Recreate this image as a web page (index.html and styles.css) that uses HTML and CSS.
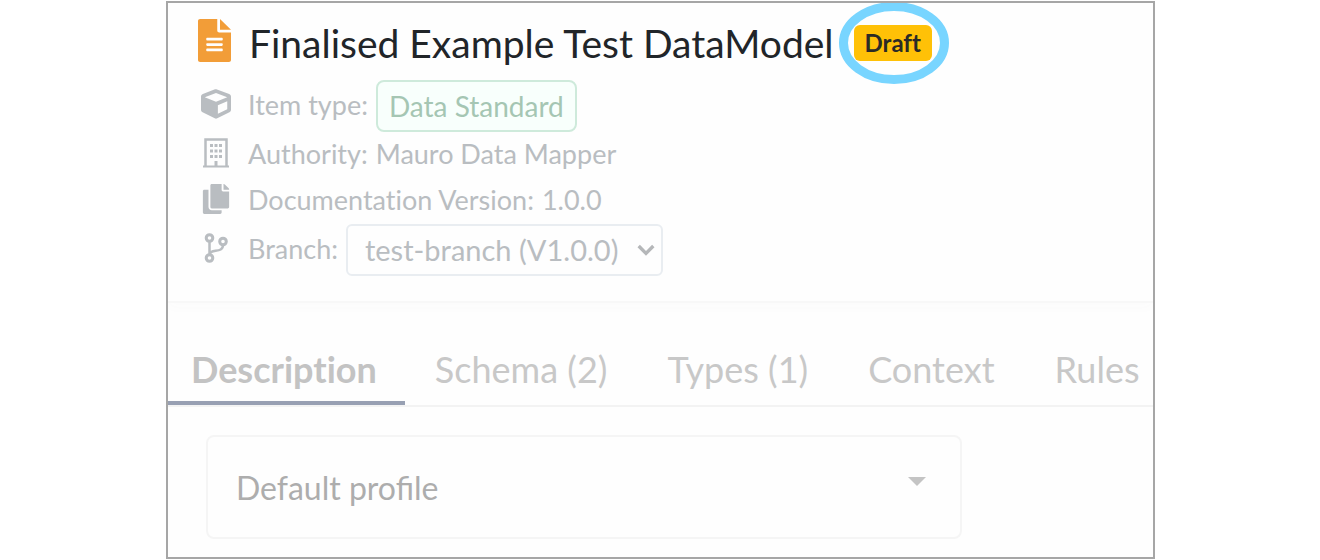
FILE: index.html
```html
<!DOCTYPE html>
<html lang="en">
<head>
<meta charset="utf-8">
<title>Finalised Example Test DataModel</title>
<link rel="stylesheet" href="styles.css">
</head>
<body>
<main class="panel">
  <header class="summary">
    <div class="title-row">
      <svg class="title-icon" viewBox="0 0 384 512" preserveAspectRatio="none" aria-hidden="true"><path fill="currentColor" d="M224 136V0H24C10.700 0 0 10.700 0 24v464c0 13.300 10.700 24 24 24h336c13.300 0 24-10.700 24-24V160H248c-13.200 0-24-10.800-24-24zm64 236c0 6.600-5.400 12-12 12H108c-6.600 0-12-5.400-12-12v-8c0-6.600 5.400-12 12-12h168c6.600 0 12 5.400 12 12v8zm0-64c0 6.600-5.400 12-12 12H108c-6.600 0-12-5.400-12-12v-8c0-6.600 5.400-12 12-12h168c6.600 0 12 5.400 12 12v8zm0-72v8c0 6.600-5.400 12-12 12H108c-6.600 0-12-5.400-12-12v-8c0-6.600 5.400-12 12-12h168c6.600 0 12 5.400 12 12zm96-108H256V0z"/></svg>
      <h1 class="title">Finalised Example Test DataModel</h1>
      <span class="status"><span class="badge">Draft</span><svg class="ring" viewBox="0 0 112 84" aria-hidden="true"><ellipse cx="56" cy="42" rx="50.500" ry="36.500" fill="none" stroke="#78d5ff" stroke-width="9"/></svg></span>
    </div>
    <div class="detail tall">
      <svg class="icon" viewBox="0 0 512 512" aria-hidden="true"><path fill="currentColor" d="M239.100 6.300l-208 78c-18.700 7-31.100 25-31.100 45v225.100c0 18.200 10.300 34.800 26.500 42.900l208 104c13.500 6.800 29.400 6.800 42.900 0l208-104c16.300-8.100 26.500-24.800 26.500-42.900V129.300c0-20-12.400-37.900-31.100-44.900l-208-78C262 2.200 250 2.200 239.100 6.300zM256 68.400l192 72v1.100l-192 78-192-78v-1.100l192-72zm32 356V275.500l160-65v133.900l-160 80z"/></svg>
      <span class="label">Item type:</span>
      <span class="pill">Data Standard</span>
    </div>
    <div class="detail">
      <svg class="icon" viewBox="0 0 26 30" aria-hidden="true"><g fill="none" stroke="currentColor"><path stroke-width="2" d="M0 28.500h26"/><path stroke-width="2.500" d="M2.500 28V1.500h21V28"/></g><path fill="currentColor" d="M7 6h3v3H7zM11.500 6h3v3h-3zM16 6h3v3h-3zM7 11.500h3v3H7zM11.500 11.500h3v3h-3zM16 11.500h3v3h-3zM7 17h3v3H7zM11.500 17h3v3h-3zM16 17h3v3h-3zM11.500 23h3v5h-3z"/></svg>
      <span class="label">Authority:</span>
      <span class="value">Mauro Data Mapper</span>
    </div>
    <div class="detail">
      <svg class="icon" viewBox="0 0 448 512" aria-hidden="true"><path fill="currentColor" d="M320 448v40c0 13.300-10.700 24-24 24H24c-13.300 0-24-10.700-24-24V120c0-13.300 10.700-24 24-24h72v296c0 30.900 25.100 56 56 56h168zm0-344V0H152c-13.300 0-24 10.700-24 24v368c0 13.300 10.700 24 24 24h272c13.300 0 24-10.700 24-24V128H344c-13.200 0-24-10.800-24-24zm121-31L375 7A24 24 0 0 0 358.100 0H352v96h96v-6.100a24 24 0 0 0-7-16.900z"/></svg>
      <span class="label">Documentation Version:</span>
      <span class="value">1.0.0</span>
    </div>
    <div class="detail tall">
      <svg class="icon" viewBox="0 0 24 30" aria-hidden="true"><g fill="none" stroke="currentColor" stroke-width="3"><circle cx="5.500" cy="5" r="3.300"/><circle cx="5.500" cy="25" r="3.300"/><circle cx="19" cy="8.500" r="3.300"/><path stroke-width="2.500" d="M5.500 8v14M19 12c0 9-13.500 3-13.500 10"/></g></svg>
      <label class="label" for="branch">Branch:</label>
      <span class="select-box">
        <select id="branch" class="select branch"><option>test-branch (V1.0.0)</option></select>
        <svg class="chevron" viewBox="0 0 16 12" aria-hidden="true"><path d="M1.500 2.500 8 9l6.500-6.500" fill="none" stroke="currentColor" stroke-width="3"/></svg>
      </span>
    </div>
  </header>
  <nav class="tabs" role="tablist">
    <button class="tab active" role="tab" aria-selected="true">Description</button>
    <button class="tab" role="tab">Schema (2)</button>
    <button class="tab" role="tab">Types (1)</button>
    <button class="tab" role="tab">Context</button>
    <button class="tab" role="tab">Rules</button>
  </nav>
  <section class="content">
    <span class="select-box">
      <select class="select profile" aria-label="Profile"><option>Default profile</option></select>
      <svg class="arrow" viewBox="0 0 16 8" aria-hidden="true"><path d="M0 0h16L8 8z" fill="currentColor"/></svg>
    </span>
  </section>
</main>
</body>
</html>
```
FILE: styles.css
```css
* { box-sizing: border-box; }

body {
  margin: 0;
  padding: 1px 165px 1px 166px;
  background: #fff;
  font-family: Lato, "Noto Sans", sans-serif;
}

.panel {
  border: 2px solid #a6a6a6;
  background: #fefefe;
  overflow: hidden;
}

.summary {
  padding: 0 30px 25px;
  border-bottom: 2px solid #f8f8f8;
  box-shadow: 0 4px 12px #fbfbfb;
  color: #b9bdc1;
  font-size: 27px;
  font-variant-ligatures: none;
}

.title-row {
  display: flex;
  align-items: center;
  height: 77px;
  padding-top: 2px;
}

.title-icon {
  width: 33px;
  height: 43px;
  margin: 0 18px 4px 0;
  color: #f29d38;
}

.title {
  margin: 0 20px 0 0;
  color: #212529;
  font-size: 39px;
  font-weight: 400;
  line-height: 48px;
  white-space: nowrap;
}

.status {
  position: relative;
  display: flex;
}

.badge {
  padding: 0 11px;
  border-radius: 6px;
  background: #ffc107;
  color: #2b2b26;
  font-size: 24px;
  font-weight: 700;
  line-height: 36px;
}

.ring {
  position: absolute;
  top: -24px;
  left: -16px;
  width: 112px;
  height: 84px;
}

.detail {
  display: flex;
  align-items: center;
  gap: 8px;
  height: 46px;
}

.tall { height: 52px; }

.icon {
  width: 36px;
  height: 30px;
  margin: 0 6px 4px 0;
}

.label,
.value { padding-bottom: 4px; }

.pill {
  padding: 0 11px;
  border: 2px solid #ceeadb;
  border-radius: 8px;
  background: #f8fffc;
  color: #a5c6b3;
  font-size: 28px;
  line-height: 48px;
}

.select-box {
  display: grid;
  align-items: center;
}

.select-box > * { grid-area: 1 / 1; }

.select {
  appearance: none;
  width: 100%;
  border: 2px solid #e9edf1;
  border-radius: 6px;
  background: #fefefe;
  color: #b9bdc1;
  font: inherit;
}

.branch {
  height: 52px;
  padding: 0 42px 2px 17px;
  font-size: 29px;
}

.chevron {
  justify-self: end;
  width: 18px;
  height: 14px;
  margin-right: 8px;
  color: #b5b7b9;
  pointer-events: none;
}

.tabs {
  display: flex;
  border-bottom: 2px solid #f3f3f3;
}

.tab {
  flex: none;
  height: 102px;
  padding: 34px 30px 0;
  border: 0;
  border-bottom: 4px solid transparent;
  background: none;
  color: #c8c8c8;
  font: inherit;
  font-size: 36px;
  font-variant-ligatures: none;
}

.active {
  padding: 34px 28px 0 23px;
  border-color: #98a0b3;
  color: #c3c3c3;
  font-weight: 700;
}

.content { padding: 28px 191px 18px 38px; }

.profile {
  height: 104px;
  padding: 0 60px 0 28px;
  border-color: #f5f5f5;
  border-radius: 8px;
  color: #adadad;
  font-size: 32px;
}

.arrow {
  justify-self: end;
  width: 18px;
  height: 9px;
  margin: 0 36px 12px 0;
  color: #c4c4c4;
  pointer-events: none;
}
```
